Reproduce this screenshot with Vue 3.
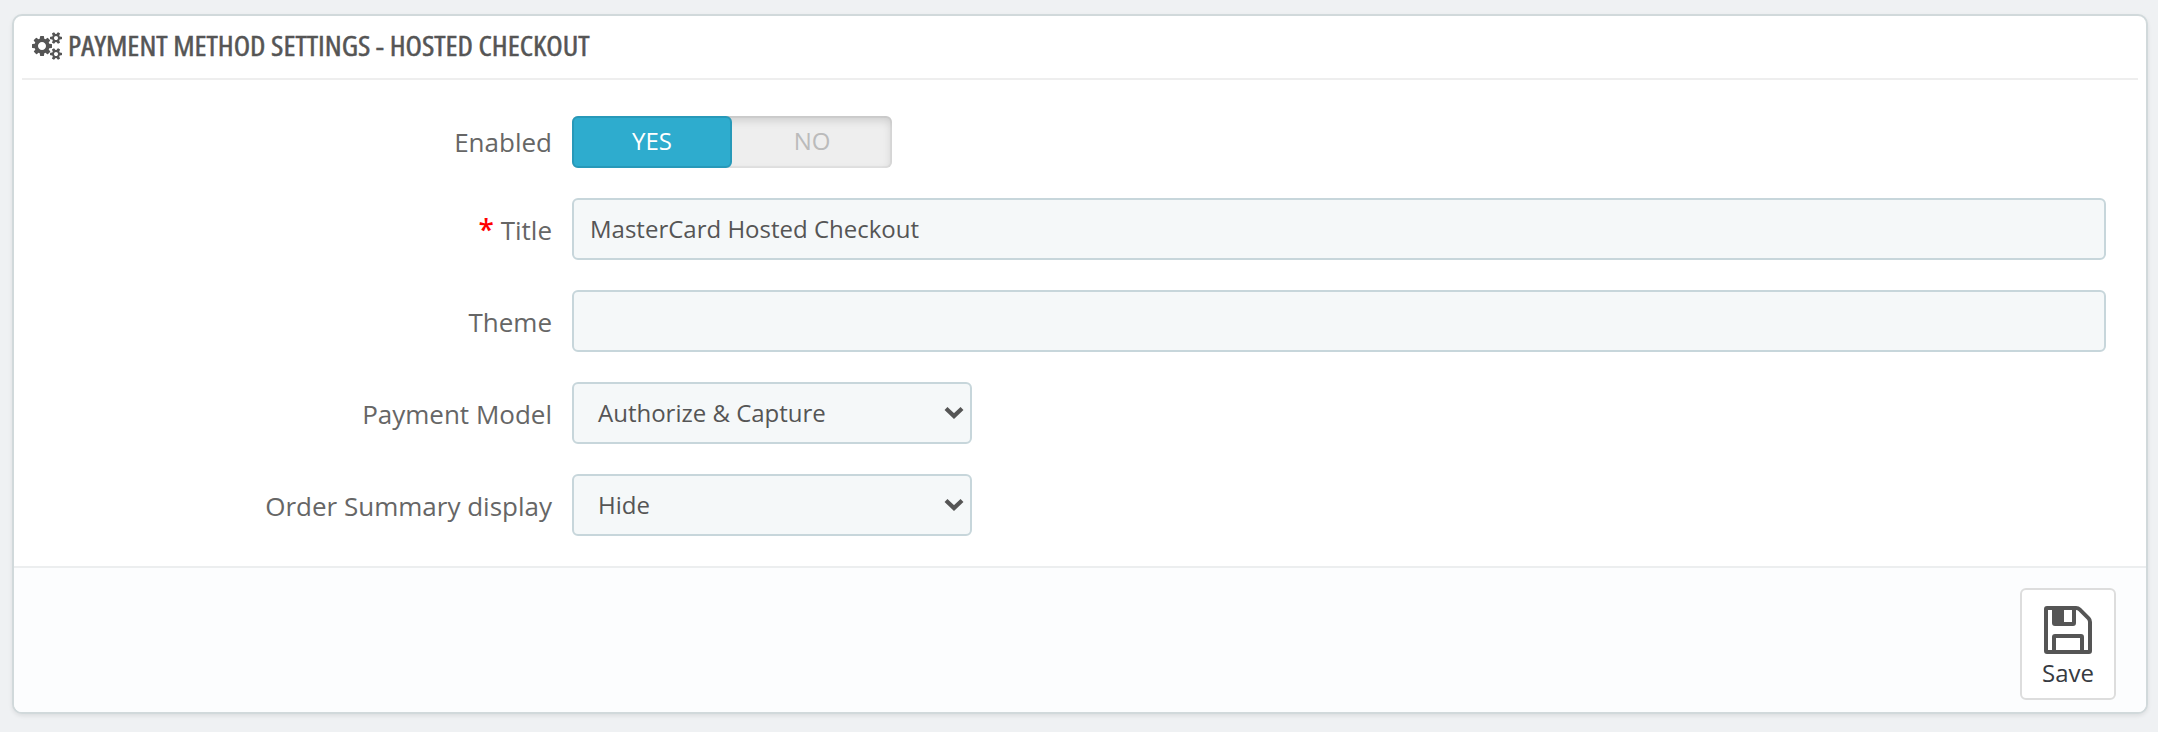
<script setup>
import { ref } from 'vue'

const enabled = ref(true)
const title = ref('MasterCard Hosted Checkout')
const theme = ref('')
const selects = [
  { label: 'Payment Model', value: 'Authorize & Capture' },
  { label: 'Order Summary display', value: 'Hide' },
]
</script>

<template>
  <main class="page">
    <form class="panel" @submit.prevent>
      <header class="heading">
        <svg class="cogs" viewBox="0 0 1920 1792" aria-hidden="true">
          <path d="M896 896q0-106-75-181t-181-75-181 75-75 181 75 181 181 75 181-75 75-181zm768 512q0-52-38-90t-90-38-90 38-38 90q0 53 37.5 90.5t90.5 37.5 90.5-37.5 37.5-90.5zm0-1024q0-52-38-90t-90-38-90 38-38 90q0 53 37.5 90.5t90.5 37.5 90.5-37.5 37.5-90.5zm-384 421v185q0 10-7 19.5t-16 10.5l-155 24q-11 35-32 76 34 48 90 115 7 11 7 20 0 12-7 19-23 30-82.500 89.500t-78.500 59.500q-11 0-21-7l-115-90q-37 19-77 31-11 108-23 155-7 24-30 24h-186q-11 0-20-7.500t-10-17.500l-23-153q-34-10-75-31l-118 89q-7 7-20 7-11 0-21-8-144-133-144-160 0-9 7-19 10-14 41-53t47-61q-23-44-35-82l-152-24q-10-1-17-9.500t-7-19.500v-185q0-10 7-19.500t16-10.500l155-24q11-35 32-76-34-48-90-115-7-11-7-20 0-12 7-20 22-30 82-89t79-59q11 0 21 7l115 90q34-18 77-32 11-108 23-154 7-24 30-24h186q11 0 20 7.500t10 17.500l23 153q34 10 75 31l118-89q8-7 20-7 11 0 21 8 144 133 144 160 0 8-7 19-12 16-42 54t-45 60q23 48 34 82l152 23q10 2 17 10.500t7 19.500zm640 533v140q0 16-149 31-12 27-30 52 51 113 51 138 0 4-4 7-122 71-124 71-8 0-46-47t-52-68q-20 2-30 2t-30-2q-14 21-52 68t-46 47q-2 0-124-71-4-3-4-7 0-25 51-138-18-25-30-52-149-15-149-31v-140q0-16 149-31 13-29 30-52-51-113-51-138 0-4 4-7 4-2 35-20t59-34 30-16q8 0 46 46.500t52 67.500q20-2 30-2t30 2q51-71 92-112l6-2q4 0 124 70 4 3 4 7 0 25-51 138 17 23 30 52 149 15 149 31zm0-1024v140q0 16-149 31-12 27-30 52 51 113 51 138 0 4-4 7-122 71-124 71-8 0-46-47t-52-68q-20 2-30 2t-30-2q-14 21-52 68t-46 47q-2 0-124-71-4-3-4-7 0-25 51-138-18-25-30-52-149-15-149-31v-140q0-16 149-31 13-29 30-52-51-113-51-138 0-4 4-7 4-2 35-20t59-34 30-16q8 0 46 46.500t52 67.500q20-2 30-2t30 2q51-71 92-112l6-2q4 0 124 70 4 3 4 7 0 25-51 138 17 23 30 52 149 15 149 31z" />
        </svg>
        <span class="heading-text">PAYMENT METHOD SETTINGS - HOSTED CHECKOUT</span>
      </header>

      <div class="fields">
        <div class="row row-switch">
          <span class="label">Enabled</span>
          <div class="switch">
            <button type="button" class="option" :class="{ active: enabled }" @click="enabled = true">YES</button>
            <button type="button" class="option" :class="{ active: !enabled }" @click="enabled = false">NO</button>
          </div>
        </div>
        <div class="row">
          <label class="label" for="title"><span class="required">*</span> Title</label>
          <input id="title" v-model="title" class="control" type="text" />
        </div>
        <div class="row">
          <label class="label" for="theme">Theme</label>
          <input id="theme" v-model="theme" class="control" type="text" />
        </div>
        <div v-for="item in selects" :key="item.label" class="row">
          <span class="label">{{ item.label }}</span>
          <div class="control select">
            <span>{{ item.value }}</span>
            <svg class="chevron" viewBox="0 0 20 14" aria-hidden="true"><path d="M2 2.500l8 7.600 8-7.600" /></svg>
          </div>
        </div>
      </div>

      <footer class="footer">
        <button type="submit" class="save">
          <svg class="floppy" viewBox="0 0 48 48" aria-hidden="true">
            <path fill-rule="evenodd" d="M3 0H32Q35 0 37 2L46 11Q48 13 48 16V45Q48 48 45 48H3Q0 48 0 45V3Q0 0 3 0ZM4 4V44H8V31Q8 28 11 28H37Q40 28 40 31V44H44V16Q44 14.500 43 13.500L34.500 5Q33.500 4 32 4V17Q32 20 29 20H11Q8 20 8 17V4ZM20 4V16H28V4ZM12 32V44H36V32Z" />
          </svg>
          <span>Save</span>
        </button>
      </footer>
    </form>
  </main>
</template>

<style>
body {
  background: #eff1f3;
}
</style>

<style scoped>
.page {
  box-sizing: border-box;
  height: 732px;
  padding: 14px 10px 18px 12px;
  font-family: "Open Sans", "Noto Sans", sans-serif;
  color: #555;
}
.panel {
  box-sizing: border-box;
  display: flex;
  flex-direction: column;
  height: 700px;
  border: 2px solid #d1d9db;
  border-radius: 10px;
  background: #fff;
  box-shadow: 0 2px 4px rgba(0, 0, 0, 0.08);
  overflow: hidden;
}
.heading {
  box-sizing: border-box;
  display: flex;
  flex: none;
  align-items: center;
  height: 64px;
  margin: 0 8px;
  padding: 0 10px 2px;
  border-bottom: 2px solid #eee;
}
.cogs {
  flex: none;
  width: 30px;
  height: 28px;
  margin-right: 6px;
  fill: #555;
}
.heading-text {
  padding-bottom: 2px;
  font-size: 28px;
  line-height: 40px;
  font-weight: 400;
  font-stretch: 75%;
  white-space: nowrap;
  -webkit-text-stroke: 0.5px #555;
  transform: scaleX(1.074);
  transform-origin: left center;
}
.fields {
  box-sizing: border-box;
  display: flex;
  flex: none;
  flex-direction: column;
  gap: 30px;
  height: 486px;
  padding: 36px 40px 0 0;
}
.row {
  display: flex;
  height: 62px;
}
.row-switch {
  height: 52px;
}
.label {
  box-sizing: border-box;
  width: 558px;
  padding: 14px 20px 0 0;
  font-size: 26px;
  line-height: 36px;
  text-align: right;
  color: #666;
}
.row-switch .label {
  padding-top: 8px;
}
.required {
  color: #f00;
  font-size: 28px;
  font-weight: 600;
  line-height: 30px;
}
.control {
  box-sizing: border-box;
  flex: 1;
  height: 62px;
  padding: 0 16px 1px;
  border: 2px solid #c7d6db;
  border-radius: 6px;
  outline: none;
  background: #f5f8f9;
  color: #555;
  font: 24px "Open Sans", "Noto Sans", sans-serif;
}
.select {
  display: flex;
  flex: none;
  align-items: center;
  justify-content: space-between;
  width: 400px;
  padding: 0 6px 1px 24px;
}
.chevron {
  width: 20px;
  height: 14px;
  fill: none;
  stroke: #555;
  stroke-width: 4.2;
}
.switch {
  display: flex;
  width: 320px;
  border-radius: 6px;
  background: #eee;
  box-shadow: inset 0 0 0 2px rgba(0, 0, 0, 0.04), inset 0 4px 10px rgba(0, 0, 0, 0.15);
}
.option {
  box-sizing: border-box;
  width: 160px;
  padding: 0 0 3px;
  border: 2px solid transparent;
  border-radius: 6px;
  background: transparent;
  color: #bbb;
  font: 24px "Open Sans", "Noto Sans", sans-serif;
}
.option.active {
  border-color: #2799b9;
  background: #2eacce;
  color: #fff;
}
.footer {
  box-sizing: border-box;
  display: flex;
  flex: none;
  justify-content: flex-end;
  height: 146px;
  padding: 20px 30px 0;
  border-top: 2px solid #eceeef;
  background: #fcfdfe;
}
.save {
  box-sizing: border-box;
  display: flex;
  flex-direction: column;
  align-items: center;
  width: 96px;
  height: 112px;
  padding: 16px 0 0;
  border: 2px solid #ddd;
  border-radius: 6px;
  background: #fff;
  color: #363a41;
  font: 24px/33px "Open Sans", "Noto Sans", sans-serif;
}
.floppy {
  flex: none;
  width: 48px;
  height: 48px;
  margin-bottom: 2px;
  fill: #555;
}
</style>
